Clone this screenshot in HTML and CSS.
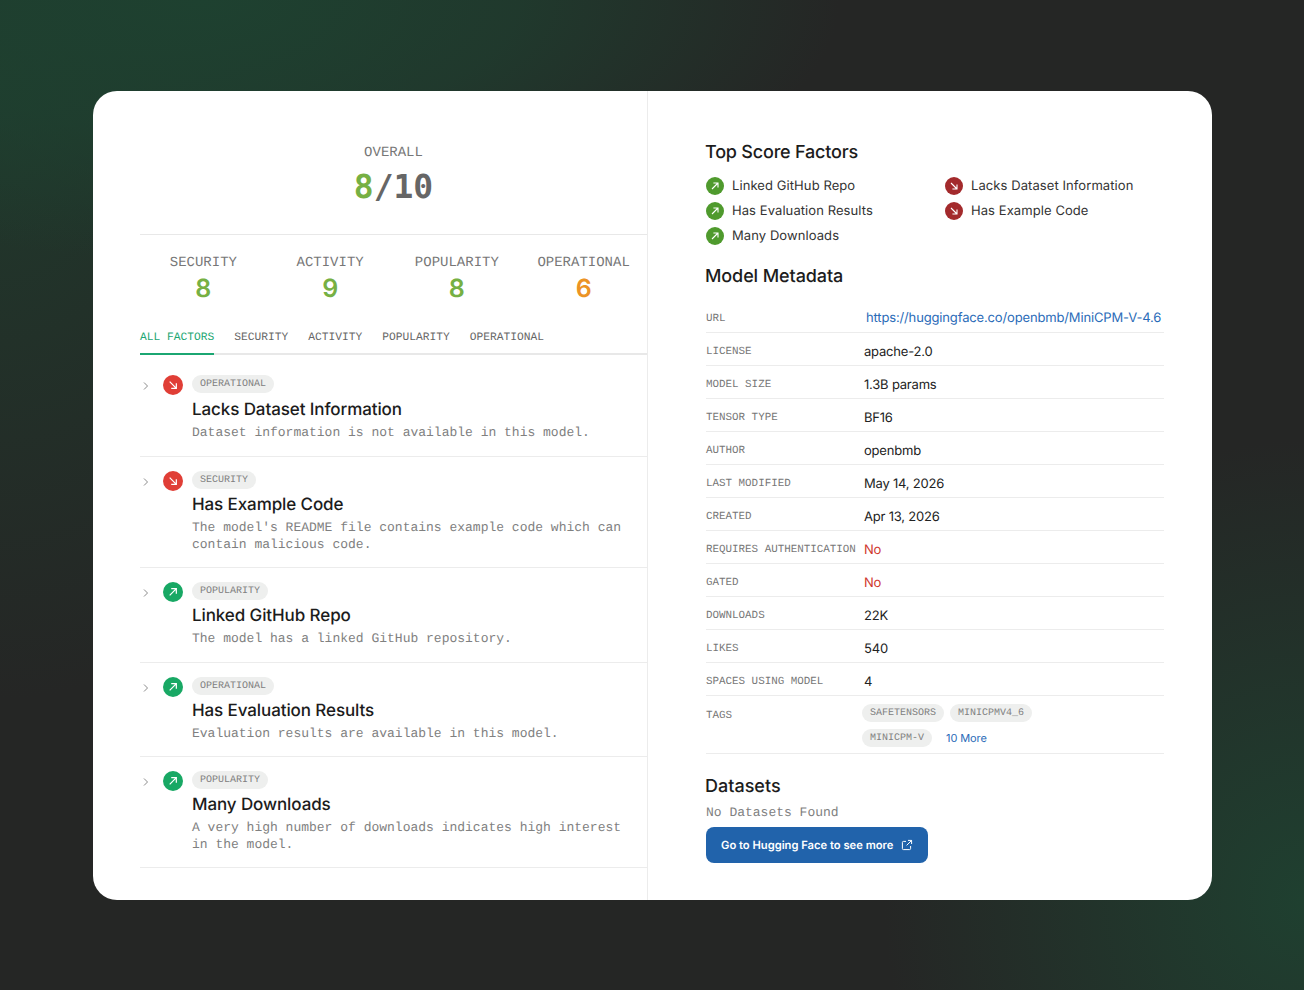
FILE: index.html
```html
<!DOCTYPE html>
<html lang="en">
<head>
  <meta charset="UTF-8">
  <title>Model Score</title>
  <link rel="stylesheet" href="styles.css">
</head>
<body>
  <svg class="sprite" width="0" height="0">
    <symbol id="up" viewBox="0 0 18 18"><path d="M6 12 12 6M7.4 6H12v4.6" fill="none" stroke="#fff" stroke-width="1.1"/></symbol>
    <symbol id="down" viewBox="0 0 18 18"><path d="M6 6l6 6M12 7.4V12H7.4" fill="none" stroke="#fff" stroke-width="1.1"/></symbol>
    <symbol id="chev" viewBox="0 0 12 12"><path d="M4 2.5 7.5 6 4 9.5" fill="none" stroke="#8b8b8b" stroke-width="1"/></symbol>
  </svg>
  <main class="card">
    <section class="left">
      <div class="overall">
        <div class="overall-label">OVERALL</div>
        <div class="overall-score"><span class="green">8</span>/10</div>
      </div>
      <div class="scores">
        <div class="score"><div class="score-label">SECURITY</div><div class="score-val green">8</div></div>
        <div class="score"><div class="score-label">ACTIVITY</div><div class="score-val green">9</div></div>
        <div class="score"><div class="score-label">POPULARITY</div><div class="score-val green">8</div></div>
        <div class="score"><div class="score-label">OPERATIONAL</div><div class="score-val orange">6</div></div>
      </div>
      <nav class="tabs">
        <a class="tab active">ALL FACTORS</a>
        <a class="tab">SECURITY</a>
        <a class="tab">ACTIVITY</a>
        <a class="tab">POPULARITY</a>
        <a class="tab">OPERATIONAL</a>
      </nav>
      <div class="factors">
        <article class="factor">
          <svg class="chev"><use href="#chev"/></svg>
          <span class="badge bad"><svg><use href="#down"/></svg></span>
          <div class="factor-body">
            <span class="pill">OPERATIONAL</span>
            <h3>Lacks Dataset Information</h3>
            <p>Dataset information is not available in this model.</p>
          </div>
        </article>
        <article class="factor">
          <svg class="chev"><use href="#chev"/></svg>
          <span class="badge bad"><svg><use href="#down"/></svg></span>
          <div class="factor-body">
            <span class="pill">SECURITY</span>
            <h3>Has Example Code</h3>
            <p>The model's README file contains example code which can contain malicious code.</p>
          </div>
        </article>
        <article class="factor">
          <svg class="chev"><use href="#chev"/></svg>
          <span class="badge good"><svg><use href="#up"/></svg></span>
          <div class="factor-body">
            <span class="pill">POPULARITY</span>
            <h3>Linked GitHub Repo</h3>
            <p>The model has a linked GitHub repository.</p>
          </div>
        </article>
        <article class="factor">
          <svg class="chev"><use href="#chev"/></svg>
          <span class="badge good"><svg><use href="#up"/></svg></span>
          <div class="factor-body">
            <span class="pill">OPERATIONAL</span>
            <h3>Has Evaluation Results</h3>
            <p>Evaluation results are available in this model.</p>
          </div>
        </article>
        <article class="factor">
          <svg class="chev"><use href="#chev"/></svg>
          <span class="badge good"><svg><use href="#up"/></svg></span>
          <div class="factor-body">
            <span class="pill">POPULARITY</span>
            <h3>Many Downloads</h3>
            <p>A very high number of downloads indicates high interest in the model.</p>
          </div>
        </article>
      </div>
    </section>

    <section class="right">
      <h2 class="top-title">Top Score Factors</h2>
      <div class="top-grid">
        <div class="top-col">
          <div class="top-item"><span class="dot dot-good"><svg><use href="#up"/></svg></span>Linked GitHub Repo</div>
          <div class="top-item"><span class="dot dot-good"><svg><use href="#up"/></svg></span>Has Evaluation Results</div>
          <div class="top-item"><span class="dot dot-good"><svg><use href="#up"/></svg></span>Many Downloads</div>
        </div>
        <div class="top-col">
          <div class="top-item"><span class="dot dot-bad"><svg><use href="#down"/></svg></span>Lacks Dataset Information</div>
          <div class="top-item"><span class="dot dot-bad"><svg><use href="#down"/></svg></span>Has Example Code</div>
        </div>
      </div>

      <h2 class="meta-title">Model Metadata</h2>
      <div class="meta">
        <div class="row"><span class="key">URL</span><a class="val link url">https://huggingface.co/openbmb/MiniCPM-V-4.6</a></div>
        <div class="row"><span class="key">LICENSE</span><span class="val">apache-2.0</span></div>
        <div class="row"><span class="key">MODEL SIZE</span><span class="val">1.3B params</span></div>
        <div class="row"><span class="key">TENSOR TYPE</span><span class="val">BF16</span></div>
        <div class="row"><span class="key">AUTHOR</span><span class="val">openbmb</span></div>
        <div class="row"><span class="key">LAST MODIFIED</span><span class="val">May 14, 2026</span></div>
        <div class="row"><span class="key">CREATED</span><span class="val">Apr 13, 2026</span></div>
        <div class="row"><span class="key">REQUIRES AUTHENTICATION</span><span class="val no">No</span></div>
        <div class="row"><span class="key">GATED</span><span class="val no">No</span></div>
        <div class="row"><span class="key">DOWNLOADS</span><span class="val">22K</span></div>
        <div class="row"><span class="key">LIKES</span><span class="val">540</span></div>
        <div class="row"><span class="key">SPACES USING MODEL</span><span class="val">4</span></div>
        <div class="row row-tags">
          <span class="key">TAGS</span>
          <div class="tags">
            <span class="pill">SAFETENSORS</span>
            <span class="pill">MINICPMV4_6</span>
            <span class="pill">MINICPM-V</span>
            <a class="link more">10 More</a>
          </div>
        </div>
      </div>

      <h2 class="ds-title">Datasets</h2>
      <p class="ds-empty">No Datasets Found</p>
      <a class="btn">Go to Hugging Face to see more
        <svg width="12" height="12" viewBox="0 0 12 12"><path d="M9.6 7v2.6a1 1 0 0 1-1 1H2.4a1 1 0 0 1-1-1V3.4a1 1 0 0 1 1-1H5M7 1.4h3.6V5M10.6 1.4 5.6 6.4" fill="none" stroke="#fff" stroke-width="1"/></svg>
      </a>
    </section>
  </main>
</body>
</html>
```

FILE: styles.css
```css
* {
  box-sizing: border-box;
}
html, body {
  margin: 0;
  height: 990px;
  overflow: hidden;
}
body {
  padding: 91px 92px 0 93px;
  font-family: Inter, "Liberation Sans", sans-serif;
  color: #1c1c1c;
  text-rendering: geometricPrecision;
  background-color: #252625;
  background-image:
    radial-gradient(ellipse 640px 260px at 200px 0, #1e4130 0%, rgba(30, 65, 48, 0.7) 50%, rgba(30, 65, 48, 0) 100%),
    radial-gradient(ellipse 420px 620px at 0 80px, #20392c 0%, rgba(32, 57, 44, 0) 100%),
    radial-gradient(ellipse 420px 460px at 1304px 900px, #1f4030 0%, rgba(31, 64, 48, 0) 100%);
}
.sprite {
  position: absolute;
}
.card {
  display: flex;
  height: 809px;
  background: #fff;
  border-radius: 24px;
  overflow: hidden;
}
.left {
  width: 555px;
  padding-left: 47px;
  border-right: 1px solid #ececec;
}
.green { color: #76b043; }
.orange { color: #ec9325; }

.overall {
  height: 144px;
  padding-top: 52px;
  text-align: center;
  border-bottom: 1px solid #e8e8e8;
}
.overall-label {
  font: 14px/20px "Liberation Mono", monospace;
  color: #777;
}
.overall-score {
  margin-top: 4px;
  font: 700 33px/40px "DejaVu Sans Mono", monospace;
  color: #666;
}
.scores {
  display: grid;
  grid-template-columns: repeat(4, 1fr);
  padding-top: 18px;
  text-align: center;
}
.score-label {
  font: 14px/20px "Liberation Mono", monospace;
  color: #777;
}
.score-val {
  margin-top: 1px;
  font: 600 25px/30px Inter, sans-serif;
}
.tabs {
  display: flex;
  gap: 20px;
  margin-top: 16px;
  border-bottom: 2px solid #e8e8e8;
  height: 35px;
}
.tab {
  height: 35px;
  padding-top: 11px;
  font: 11.25px/14px "Liberation Mono", monospace;
  color: #666;
}
.tab.active {
  color: #1ba672;
  border-bottom: 2px solid #1ba672;
}
.factors {
  padding-top: 6px;
}
.factor {
  display: flex;
  align-items: flex-start;
  padding: 14px 0 14.25px;
  border-bottom: 1px solid #ececec;
}
.factor:first-child {
  padding-bottom: 15px;
}
.factor:first-child h3 {
  margin-top: 5px;
}
.chev {
  width: 12px;
  height: 12px;
  margin: 5px 0 0 0;
  flex: none;
}
.badge {
  display: block;
  flex: none;
  width: 20px;
  height: 20px;
  margin: 0 9.5px 0 10.5px;
  border-radius: 50%;
}
.badge svg {
  display: block;
  width: 20px;
  height: 20px;
}
.bad { background: #e03e36; }
.good { background: #18a864; }
.factor-body {
  padding-right: 25px;
}
.pill {
  display: block;
  width: fit-content;
  height: 18px;
  padding: 1px 8px 0;
  border-radius: 9px;
  background: #eeefee;
  font: 10px/18px "Liberation Mono", monospace;
  color: #808080;
}
.factor h3 {
  margin: 4px 0 0;
  font-size: 17px;
  font-weight: 500;
  letter-spacing: -0.1px;
  line-height: 24px;
  color: #1c1c1c;
}
.factor p {
  margin: 2px 0 0;
  font: 13px/17px "Liberation Mono", monospace;
  color: #808080;
}

.right {
  flex: 1;
  padding: 50px 48px 0 58px;
}
.right h2 {
  margin: 0 0 0 -1px;
  font-size: 18px;
  font-weight: 500;
  line-height: 24px;
}
.top-title {
  letter-spacing: -0.2px;
}
.top-grid {
  display: grid;
  grid-template-columns: 239px 1fr;
  margin-top: 8px;
}
.top-item {
  display: flex;
  align-items: center;
  gap: 8px;
  height: 25px;
  font-size: 13px;
  letter-spacing: 0.08px;
  color: #333;
}
.dot {
  display: block;
  flex: none;
  width: 18px;
  height: 18px;
  border-radius: 50%;
}
.dot svg {
  display: block;
  width: 18px;
  height: 18px;
}
.dot-good { background: #4f9a2d; }
.dot-bad { background: #a32a2c; }
.meta-title {
  margin-top: 17px !important;
  letter-spacing: -0.1px;
}
.meta {
  margin-top: 11px;
}
.row {
  display: flex;
  align-items: center;
  height: 33px;
  padding-top: 3px;
  border-bottom: 1px solid #ececec;
}
.key {
  flex: none;
  width: 158px;
  margin-top: 2px;
  font: 10.87px/14px "Liberation Mono", monospace;
  color: #777;
}
.val {
  font-size: 13px;
  letter-spacing: -0.2px;
  line-height: 20px;
  padding-top: 2px;
  color: #222;
}
.link { color: #2a6bb8; }
.url {
  padding: 0 0 0 2px;
  white-space: nowrap;
  font-size: 13px;
  letter-spacing: -0.15px;
  color: #2a6bb8;
}
.no { color: #d0392f; }
.row-tags {
  height: 58px;
  align-items: flex-start;
  padding-top: 8px;
}
.row-tags .key {
  margin-top: 5px;
}
.tags {
  display: flex;
  flex-wrap: wrap;
  align-items: center;
  gap: 7px 6px;
  width: 200px;
  margin-left: -2px;
}
.more {
  margin: -1px 0 0 8px;
  font-size: 11px;
  letter-spacing: -0.1px;
}
.ds-title {
  margin-top: 21px !important;
}
.ds-empty {
  margin: 5px 0 0;
  font: 13px/18px "Liberation Mono", monospace;
  color: #808080;
}
.btn {
  display: flex;
  align-items: center;
  justify-content: space-between;
  width: 222px;
  height: 36px;
  margin-top: 5px;
  padding: 0 15px;
  border-radius: 8px;
  background: #2163ab;
  color: #fff;
  white-space: nowrap;
  font-size: 11.2px;
  font-weight: 600;
}
```
